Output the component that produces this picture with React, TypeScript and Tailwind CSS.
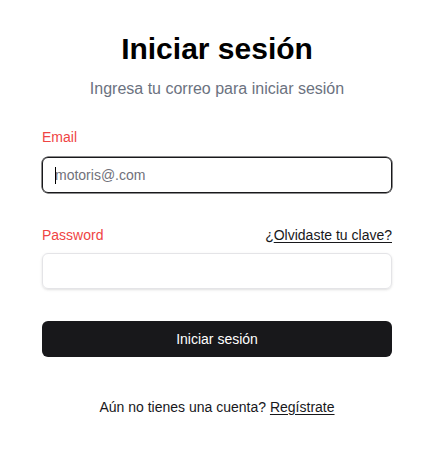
export default function App() {
  return (
    <div
      className="min-h-[460px] bg-white text-black"
      style={{ fontFamily: '"Liberation Sans", Arial, sans-serif' }}
    >
      <div className="ml-[42px] w-[350px] pt-[31px]">
        <h1 className="text-center text-[30px] leading-[36px] font-bold">
          Iniciar sesión
        </h1>
        <p className="mt-[10px] text-center text-base leading-6 text-[#6b7280]">
          Ingresa tu correo para iniciar sesión
        </p>

        <form className="mt-[26px]" onSubmit={(ev) => ev.preventDefault()}>
          <label htmlFor="email" className="block text-sm leading-5 text-[#ef4444]">
            Email
          </label>
          <div className="relative mt-[10px]">
            <input
              id="email"
              type="email"
              placeholder="motoris@.com"
              className="block h-9 w-full rounded-md border border-[#18181b] px-3 text-sm text-black outline-none ring-[0.5px] ring-[#18181b] placeholder:text-[#71717a]"
            />
            <span className="pointer-events-none absolute left-[13px] top-[10px] h-[17px] w-px bg-black" />
          </div>

          <div className="mt-8 flex items-center justify-between text-sm leading-5">
            <label htmlFor="password" className="text-[#ef4444]">
              Password
            </label>
            <span className="text-[#18181b]">
              ¿<a href="#" className="underline underline-offset-2">Olvidaste tu clave?</a>
            </span>
          </div>
          <input
            id="password"
            type="password"
            className="mt-2 block h-9 w-full rounded-md border border-[#e4e4e7] px-3 text-sm shadow-sm outline-none"
          />

          <button
            type="submit"
            className="mt-8 flex h-9 w-full items-center justify-center rounded-md bg-[#18181b] text-sm font-medium text-white"
          >
            Iniciar sesión
          </button>
        </form>

        <p className="mt-[40px] text-center text-sm leading-5 text-[#18181b]">
          Aún no tienes una cuenta?{" "}
          <a href="#" className="underline underline-offset-2">
            Regístrate
          </a>
        </p>
      </div>
    </div>
  );
}
